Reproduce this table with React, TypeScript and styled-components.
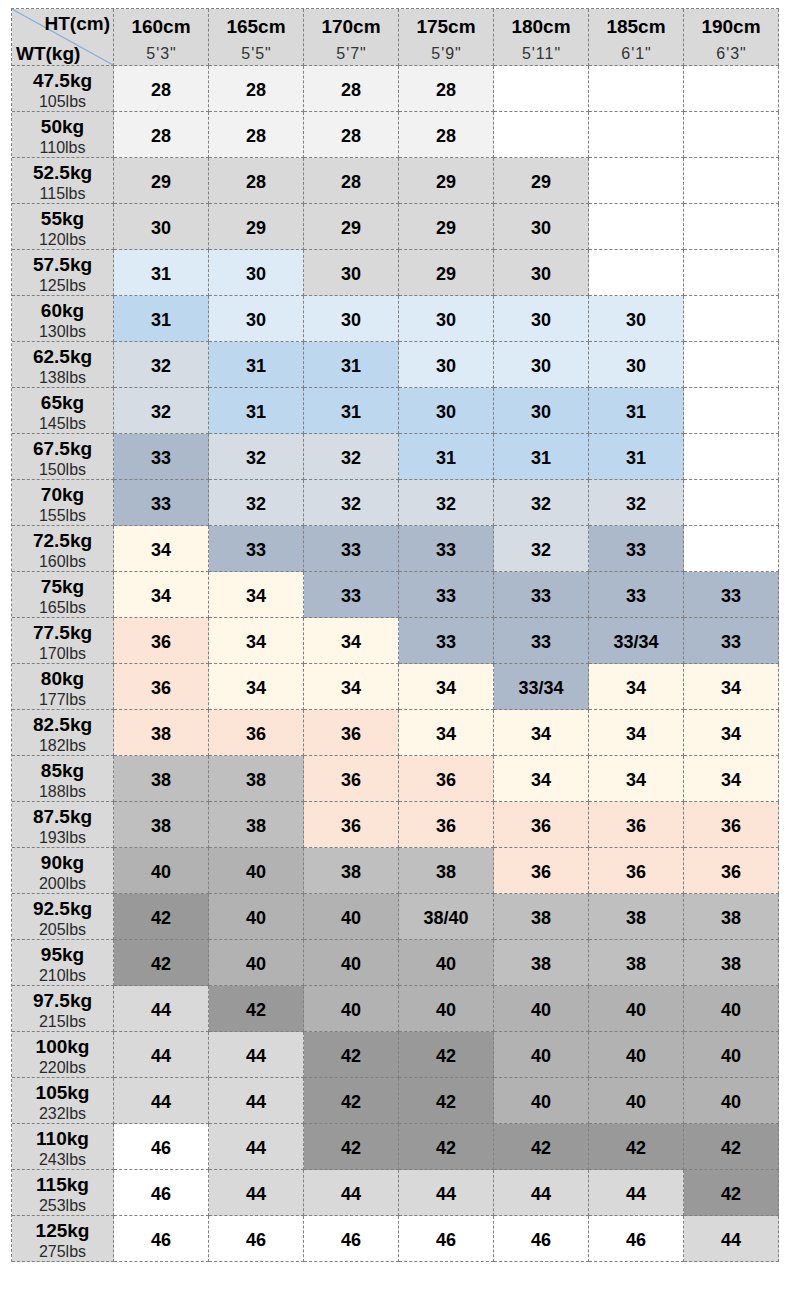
import React from "react";
import styled, { createGlobalStyle } from "styled-components";

const GlobalStyle = createGlobalStyle`
  html, body { margin: 0; padding: 0; background: #ffffff; }
  body { font-family: "Liberation Sans", Arial, Helvetica, sans-serif; color: #000; }
`;

const palette: Record<string, string> = {
  W: "#ffffff",
  L: "#f2f2f2",
  G: "#d9d9d9",
  B1: "#ddebf7",
  B2: "#bdd7ee",
  S: "#d6dce4",
  S2: "#acb9ca",
  Y: "#fff8e8",
  P: "#fce4d6",
  G38: "#bfbfbf",
  G40: "#b2b2b2",
  G42: "#999999",
  G44: "#d9d9d9",
};

const heights: [string, string][] = [
  ["160cm", `5'3"`],
  ["165cm", `5'5"`],
  ["170cm", `5'7"`],
  ["175cm", `5'9"`],
  ["180cm", `5'11"`],
  ["185cm", `6'1"`],
  ["190cm", `6'3"`],
];

type Cell = [string, string];
type Row = { kg: string; lbs: string; cells: Cell[] };

const rows: Row[] = [
  { kg: "47.5kg", lbs: "105lbs", cells: [["28", "L"], ["28", "L"], ["28", "L"], ["28", "L"], ["", "W"], ["", "W"], ["", "W"]] },
  { kg: "50kg", lbs: "110lbs", cells: [["28", "L"], ["28", "L"], ["28", "L"], ["28", "L"], ["", "W"], ["", "W"], ["", "W"]] },
  { kg: "52.5kg", lbs: "115lbs", cells: [["29", "G"], ["28", "G"], ["28", "G"], ["29", "G"], ["29", "G"], ["", "W"], ["", "W"]] },
  { kg: "55kg", lbs: "120lbs", cells: [["30", "G"], ["29", "G"], ["29", "G"], ["29", "G"], ["30", "G"], ["", "W"], ["", "W"]] },
  { kg: "57.5kg", lbs: "125lbs", cells: [["31", "B1"], ["30", "B1"], ["30", "G"], ["29", "G"], ["30", "G"], ["", "W"], ["", "W"]] },
  { kg: "60kg", lbs: "130lbs", cells: [["31", "B2"], ["30", "B1"], ["30", "B1"], ["30", "B1"], ["30", "B1"], ["30", "B1"], ["", "W"]] },
  { kg: "62.5kg", lbs: "138lbs", cells: [["32", "S"], ["31", "B2"], ["31", "B2"], ["30", "B1"], ["30", "B1"], ["30", "B1"], ["", "W"]] },
  { kg: "65kg", lbs: "145lbs", cells: [["32", "S"], ["31", "B2"], ["31", "B2"], ["30", "B2"], ["30", "B2"], ["31", "B2"], ["", "W"]] },
  { kg: "67.5kg", lbs: "150lbs", cells: [["33", "S2"], ["32", "S"], ["32", "S"], ["31", "B2"], ["31", "B2"], ["31", "B2"], ["", "W"]] },
  { kg: "70kg", lbs: "155lbs", cells: [["33", "S2"], ["32", "S"], ["32", "S"], ["32", "S"], ["32", "S"], ["32", "S"], ["", "W"]] },
  { kg: "72.5kg", lbs: "160lbs", cells: [["34", "Y"], ["33", "S2"], ["33", "S2"], ["33", "S2"], ["32", "S"], ["33", "S2"], ["", "W"]] },
  { kg: "75kg", lbs: "165lbs", cells: [["34", "Y"], ["34", "Y"], ["33", "S2"], ["33", "S2"], ["33", "S2"], ["33", "S2"], ["33", "S2"]] },
  { kg: "77.5kg", lbs: "170lbs", cells: [["36", "P"], ["34", "Y"], ["34", "Y"], ["33", "S2"], ["33", "S2"], ["33/34", "S2"], ["33", "S2"]] },
  { kg: "80kg", lbs: "177lbs", cells: [["36", "P"], ["34", "Y"], ["34", "Y"], ["34", "Y"], ["33/34", "S2"], ["34", "Y"], ["34", "Y"]] },
  { kg: "82.5kg", lbs: "182lbs", cells: [["38", "P"], ["36", "P"], ["36", "P"], ["34", "Y"], ["34", "Y"], ["34", "Y"], ["34", "Y"]] },
  { kg: "85kg", lbs: "188lbs", cells: [["38", "G38"], ["38", "G38"], ["36", "P"], ["36", "P"], ["34", "Y"], ["34", "Y"], ["34", "Y"]] },
  { kg: "87.5kg", lbs: "193lbs", cells: [["38", "G38"], ["38", "G38"], ["36", "P"], ["36", "P"], ["36", "P"], ["36", "P"], ["36", "P"]] },
  { kg: "90kg", lbs: "200lbs", cells: [["40", "G40"], ["40", "G40"], ["38", "G38"], ["38", "G38"], ["36", "P"], ["36", "P"], ["36", "P"]] },
  { kg: "92.5kg", lbs: "205lbs", cells: [["42", "G42"], ["40", "G40"], ["40", "G40"], ["38/40", "G38"], ["38", "G38"], ["38", "G38"], ["38", "G38"]] },
  { kg: "95kg", lbs: "210lbs", cells: [["42", "G42"], ["40", "G40"], ["40", "G40"], ["40", "G40"], ["38", "G38"], ["38", "G38"], ["38", "G38"]] },
  { kg: "97.5kg", lbs: "215lbs", cells: [["44", "G44"], ["42", "G42"], ["40", "G40"], ["40", "G40"], ["40", "G40"], ["40", "G40"], ["40", "G40"]] },
  { kg: "100kg", lbs: "220lbs", cells: [["44", "G44"], ["44", "G44"], ["42", "G42"], ["42", "G42"], ["40", "G40"], ["40", "G40"], ["40", "G40"]] },
  { kg: "105kg", lbs: "232lbs", cells: [["44", "G44"], ["44", "G44"], ["42", "G42"], ["42", "G42"], ["40", "G40"], ["40", "G40"], ["40", "G40"]] },
  { kg: "110kg", lbs: "243lbs", cells: [["46", "W"], ["44", "G44"], ["42", "G42"], ["42", "G42"], ["42", "G42"], ["42", "G42"], ["42", "G42"]] },
  { kg: "115kg", lbs: "253lbs", cells: [["46", "W"], ["44", "G44"], ["44", "G44"], ["44", "G44"], ["44", "G44"], ["44", "G44"], ["42", "G42"]] },
  { kg: "125kg", lbs: "275lbs", cells: [["46", "W"], ["46", "W"], ["46", "W"], ["46", "W"], ["46", "W"], ["46", "W"], ["44", "G44"]] },
];

const Page = styled.div`
  padding: 8px 0 38px 11px;
`;

const Grid = styled.div`
  display: grid;
  grid-template-columns: 102px repeat(7, 95px);
  grid-template-rows: 57px repeat(26, 46px);
  width: max-content;
  border-top: 1px dashed #808080;
  border-left: 1px dashed #808080;
`;

const CellBase = styled.div`
  box-sizing: border-box;
  border-right: 1px dashed #808080;
  border-bottom: 1px dashed #808080;
`;

const Corner = styled(CellBase)`
  position: relative;
  background: #d9d9d9;
  display: flex;
  flex-direction: column;
  justify-content: space-between;
  padding: 4px 3px 0 4px;
  font-weight: bold;
  font-size: 19px;
  line-height: 22px;
`;

const CornerTop = styled.span`
  align-self: flex-end;
  position: relative;
  z-index: 1;
`;

const CornerBottom = styled.span`
  align-self: flex-start;
  position: relative;
  z-index: 1;
`;

const Diagonal = styled.svg`
  position: absolute;
  inset: 0;
  width: 100%;
  height: 100%;
`;

const HeadCell = styled(CellBase)`
  background: #d9d9d9;
  display: flex;
  flex-direction: column;
  align-items: center;
  padding-top: 6px;
`;

const HeadMain = styled.span`
  font-weight: bold;
  font-size: 19px;
  line-height: 24px;
`;

const HeadSub = styled.span`
  font-size: 16px;
  line-height: 18px;
  letter-spacing: 1px;
  margin-top: 6px;
  margin-left: 1px;
  color: #333333;
`;

const LabelCell = styled(CellBase)`
  background: #d9d9d9;
  display: flex;
  flex-direction: column;
  align-items: center;
  padding-top: 4px;
`;

const LabelMain = styled.span`
  font-weight: bold;
  font-size: 19px;
  line-height: 21px;
`;

const LabelSub = styled.span`
  font-size: 16px;
  line-height: 18px;
  margin-top: 2px;
  color: #2a2a2a;
`;

const DataCell = styled(CellBase)<{ $bg: string }>`
  background: ${(p) => p.$bg};
  display: flex;
  align-items: center;
  justify-content: center;
  padding-top: 3px;
  font-weight: bold;
  font-size: 18px;
`;

export default function App() {
  return (
    <>
      <GlobalStyle />
      <Page>
        <Grid>
          <Corner>
            <Diagonal viewBox="0 0 100 56" preserveAspectRatio="none">
              <line x1="0" y1="0" x2="100" y2="56" stroke="#86aedb" strokeWidth="1.1" vectorEffect="non-scaling-stroke" />
            </Diagonal>
            <CornerTop>HT(cm)</CornerTop>
            <CornerBottom>WT(kg)</CornerBottom>
          </Corner>
          {heights.map(([cm, ft]) => (
            <HeadCell key={cm}>
              <HeadMain>{cm}</HeadMain>
              <HeadSub>{ft}</HeadSub>
            </HeadCell>
          ))}
          {rows.map((r) => (
            <React.Fragment key={r.kg}>
              <LabelCell>
                <LabelMain>{r.kg}</LabelMain>
                <LabelSub>{r.lbs}</LabelSub>
              </LabelCell>
              {r.cells.map(([v, c], i) => (
                <DataCell key={i} $bg={palette[c]}>
                  {v}
                </DataCell>
              ))}
            </React.Fragment>
          ))}
        </Grid>
      </Page>
    </>
  );
}
